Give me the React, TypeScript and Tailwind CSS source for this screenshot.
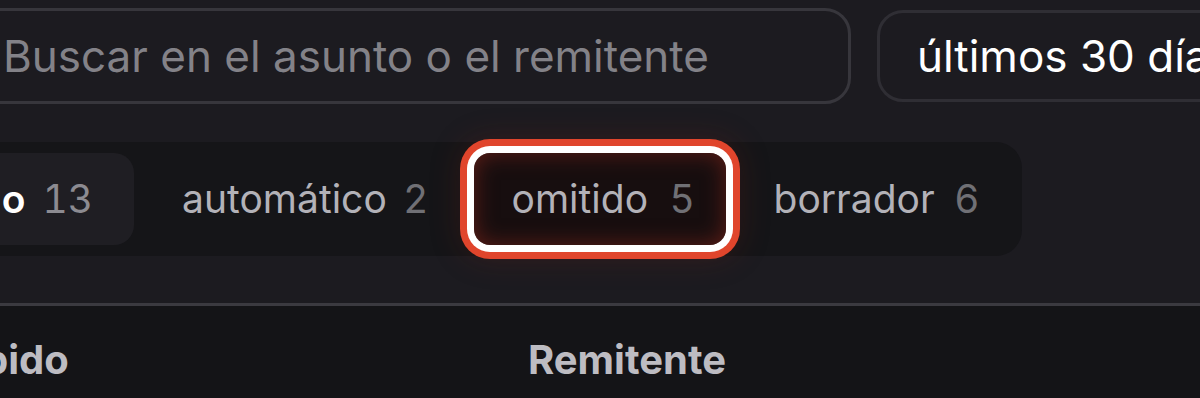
import React from "react";

export default function App() {
  return (
    <div
      className="w-[1200px] h-[398px] overflow-hidden bg-[#1c1b20] text-white"
      style={{ fontFamily: "Inter, 'Noto Sans', sans-serif" }}
    >
      {/* Top row: search + date */}
      <div className="flex items-center gap-[26px] pt-[8px] -ml-[60px] w-[1400px]">
        <div className="flex items-center h-[96px] w-[911px] shrink-0 rounded-[26px] border-[3px] border-[#37363c] pl-[60px]">
          <span className="text-[44px] text-[#838288] whitespace-nowrap">
            Buscar en el asunto o el remitente
          </span>
        </div>
        <div className="flex items-center h-[92px] w-[420px] shrink-0 rounded-[26px] border-[3px] border-[#2f2e34] pl-[37px]">
          <span className="text-[44px] text-white whitespace-nowrap">
            últimos 30 días
          </span>
        </div>
      </div>

      {/* Tabs bar */}
      <div className="mt-[38px] -ml-[118px] w-[1140px] h-[114px] rounded-[26px] bg-[#151518] p-[11px] flex items-center gap-[10px]">
        <div className="flex items-center gap-[17px] h-[92px] rounded-[20px] bg-[#1f1e23] pl-[38px] pr-[41px] text-[39px] whitespace-nowrap">
          <span className="font-semibold text-white">Todo</span>
          <span className="text-[#8c8b91] tabular-nums">13</span>
        </div>
        <div className="flex items-center gap-[17px] h-[92px] rounded-[20px] px-[38px] text-[39px] whitespace-nowrap">
          <span className="text-[#b3b2b8]">automático</span>
          <span className="text-[#707075]">2</span>
        </div>
        <div className="relative -ml-[2px] flex items-center gap-[22px] h-[92px] w-[252px] shrink-0 rounded-[16px] px-[38px] text-[39px] whitespace-nowrap bg-[#170e0f] shadow-[inset_0_0_22px_rgba(120,35,25,0.75),0_0_0_7px_#ffffff,0_0_0_14px_#e0452c,0_0_30px_14px_rgba(120,30,20,0.25)]">
          <span className="text-[#b3b2b8]">omitido</span>
          <span className="text-[#707075]">5</span>
        </div>
        <div className="flex items-center gap-[20px] h-[92px] rounded-[20px] px-[38px] text-[39px] whitespace-nowrap">
          <span className="text-[#b3b2b8]">borrador</span>
          <span className="text-[#707075]">6</span>
        </div>
      </div>

      {/* Divider */}
      <div className="mt-[47px] h-[3px] bg-[#3b3a40]" />

      {/* Table header */}
      <div className="h-[100px] bg-[#141417] flex items-start pt-[24px] -ml-[101px]">
        <div className="w-[629px] shrink-0 text-[40px] font-bold text-[#bdbcc2]">Recibido</div>
        <div className="text-[40px] font-bold text-[#bdbcc2]">Remitente</div>
      </div>
    </div>
  );
}
